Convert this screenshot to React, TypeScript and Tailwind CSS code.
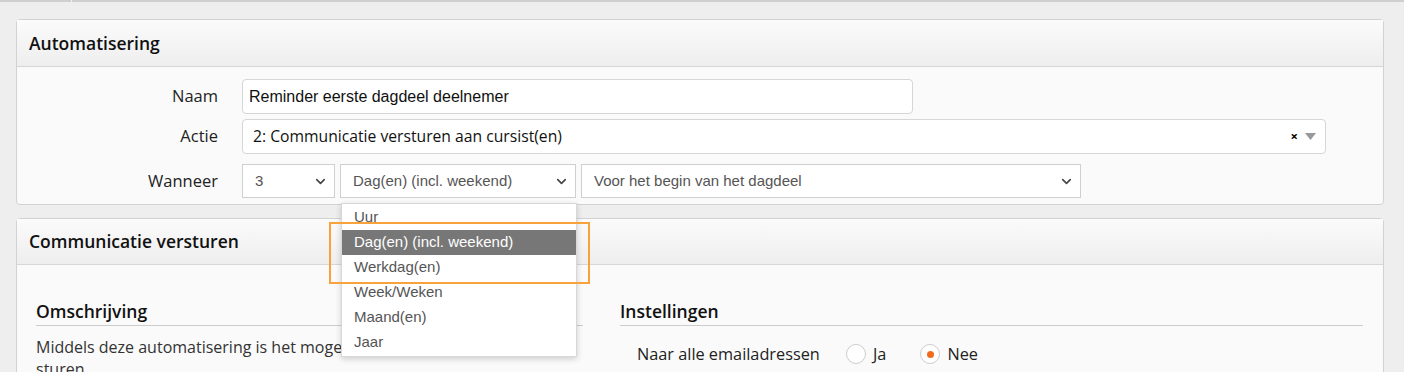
import { ChevronDown } from "lucide-react";

const opts = ["Uur", "Dag(en) (incl. weekend)", "Werkdag(en)", "Week/Weken", "Maand(en)", "Jaar"];

const Sel = ({ w, text }: { w: string; text: string }) => (
  <div className={`${w} h-[34px] flex items-center justify-between border border-[#cfcfcf] bg-white pl-[12px] pr-[6px] text-[15px] text-[#555] font-['Liberation_Sans',Arial,sans-serif]`}>
    <span>{text}</span>
    <ChevronDown className="h-[15px] w-[15px] text-[#444]" strokeWidth={2.6} />
  </div>
);

const App = () => {
  return (
    <div className="relative h-[372px] w-[1404px] overflow-hidden bg-[#eeeeee] font-['Open_Sans',sans-serif]">
      <div className="flex h-[2px]">
        <div className="w-[71px] bg-[#cfcfcf]" />
        <div className="w-[1px]" />
        <div className="flex-1 bg-[#cfcfcf]" />
      </div>

      <div className="ml-[16px] mt-[17px] w-[1368px] rounded-[4px] border border-[#d2d2d2] bg-[#fafafa]">
        <div className="flex h-[47px] items-center border-b border-[#d6d6d6] bg-gradient-to-b from-[#fbfbfb] to-[#eeeeee] px-[12px] text-[17.5px] font-semibold text-[#111]">
          Automatisering
        </div>
        <div className="pb-[6px] pt-[12px]">
          <div className="flex items-center">
            <div className="w-[201px] text-right text-[16.5px] text-[#222]">Naam</div>
            <div className="ml-[24px] flex h-[35px] w-[671px] items-center rounded-[4px] border border-[#d6d6d6] bg-white px-[6px] font-['Liberation_Sans',Arial,sans-serif] text-[16px] text-[#111]">
              Reminder eerste dagdeel deelnemer
            </div>
          </div>
          <div className="mt-[5px] flex items-center">
            <div className="w-[201px] text-right text-[16.5px] text-[#222]">Actie</div>
            <div className="ml-[24px] flex h-[35px] w-[1084px] items-center justify-between rounded-[4px] border border-[#d6d6d6] bg-white pl-[10px] pr-[9px] text-[15.7px] text-[#111]">
              <span>2: Communicatie versturen aan cursist(en)</span>
              <span className="flex items-center gap-[7px]">
                <span className="text-[13px] font-bold leading-none text-black">×</span>
                <svg width="11" height="7" viewBox="0 0 11 7"><path d="M0 0h11L5.5 7z" fill="#999" /></svg>
              </span>
            </div>
          </div>
          <div className="mt-[10px] flex items-center">
            <div className="w-[201px] text-right text-[16.5px] text-[#222]">Wanneer</div>
            <div className="ml-[24px] flex gap-[5px]">
              <Sel w="w-[93px]" text="3" />
              <Sel w="w-[236px]" text="Dag(en) (incl. weekend)" />
              <Sel w="w-[500px]" text="Voor het begin van het dagdeel" />
            </div>
          </div>
        </div>
      </div>

      <div className="ml-[16px] mt-[13px] w-[1368px] rounded-t-[4px] border border-[#d2d2d2] bg-[#fafafa] pb-[40px]">
        <div className="flex h-[46px] items-center border-b border-[#d6d6d6] bg-gradient-to-b from-[#fbfbfb] to-[#eeeeee] px-[12px] text-[17.5px] font-semibold text-[#111]">
          Communicatie versturen
        </div>
        <div className="grid grid-cols-[547px_1fr] gap-[37px] pl-[19px] pr-[20px] pt-[33px]">
          <div>
            <div className="border-b border-[#cccccc] pb-[1px] text-[17.5px] font-semibold text-[#111]">Omschrijving</div>
            <p className="mt-[10px] text-[16px] leading-[22px] text-[#333]">
              Middels deze automatisering is het mogelijk om communicatie uit te sturen.
            </p>
          </div>
          <div>
            <div className="border-b border-[#cccccc] pb-[1px] text-[17.5px] font-semibold text-[#111]">Instellingen</div>
            <div className="mt-[16px] flex items-center pl-[17px] text-[16.3px] text-[#222]">
              <span className="w-[209px]">Naar alle emailadressen</span>
              <span className="h-[20px] w-[20px] rounded-full border border-[#ccc] bg-white" />
              <span className="ml-[7px]">Ja</span>
              <span className="ml-[34px] flex h-[20px] w-[20px] items-center justify-center rounded-full border border-[#ccc] bg-white">
                <span className="h-[7px] w-[7px] rounded-full bg-[#f26b1d]" />
              </span>
              <span className="ml-[7px]">Nee</span>
            </div>
          </div>
        </div>
      </div>

      <div className="absolute left-[341px] top-[203px] w-[236px] border border-[#d8d8d8] bg-white py-[1px] font-['Liberation_Sans',Arial,sans-serif] text-[15px] text-[#555] shadow-[0_2px_6px_rgba(0,0,0,0.18)]">
        {opts.map((o, i) => (
          <div key={o} className={`h-[25px] pl-[12px] leading-[24px] ${i === 1 ? "bg-[#777] text-white" : ""}`}>
            {o}
          </div>
        ))}
      </div>
      <div className="absolute left-[329px] top-[222px] h-[62px] w-[261px] border-2 border-[#f7a23a]" />
    </div>
  );
};

export default App;
